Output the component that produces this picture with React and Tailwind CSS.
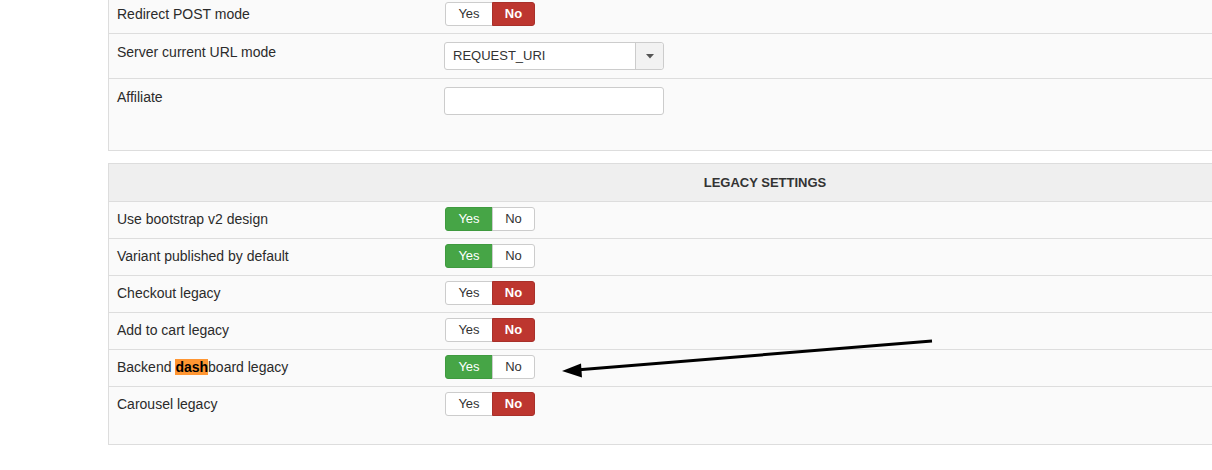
import React from 'react';

const Toggle = ({ value }) => {
  const yes = value === 'yes';
  return (
    <div className="ml-px flex h-[24px] text-[13px] leading-[22px]">
      <span
        className={
          yes
            ? 'w-[48px] rounded-l-[3px] border border-[#3f9a3f] bg-[#46a546] text-center text-white'
            : 'w-[48px] rounded-l-[3px] border border-[#ccc] bg-white text-center text-[#333]'
        }
      >
        Yes
      </span>
      <span
        className={
          yes
            ? 'ml-[-1px] w-[43px] rounded-r-[3px] border border-[#ccc] bg-white text-center text-[#333]'
            : 'ml-[-1px] w-[43px] rounded-r-[3px] border border-[#a8302a] bg-[#bd362f] text-center font-bold text-white'
        }
      >
        No
      </span>
    </div>
  );
};

const Row = ({ label, children, h = 'h-[37px]', labelPt = 'pt-2', ctrlPt = 'pt-[5px]', last }) => (
  <div className={`flex ${h} ${last ? '' : 'border-b border-[#ddd]'}`}>
    <div className={`w-[335px] pl-2 text-[14px] leading-[18px] text-[#2b2b2b] ${labelPt}`}>{label}</div>
    <div className={ctrlPt}>{children}</div>
  </div>
);

const legacy = [
  { label: 'Use bootstrap v2 design', value: 'yes' },
  { label: 'Variant published by default', value: 'yes' },
  { label: 'Checkout legacy', value: 'no' },
  { label: 'Add to cart legacy', value: 'no' },
  {
    label: (
      <>
        Backend <span className="bg-[#ff9632] font-bold text-black">dash</span>board legacy
      </>
    ),
    value: 'yes'
  },
  { label: 'Carousel legacy', value: 'no' }
];

export default function App() {
  return (
    <div className="relative h-[470px] w-[1212px] overflow-hidden bg-white font-['Liberation_Sans',Arial,sans-serif] text-[13px] text-[#333]">
      <div className="ml-[108px] mt-[-3px] w-[1314px]">
        {/* general settings (top cut off) */}
        <div className="border-x border-b border-[#ddd] bg-[#fafafa]">
          <Row label="Redirect POST mode">
            <Toggle value="no" />
          </Row>
          <Row label="Server current URL mode" h="h-[45px]" labelPt="pt-[9px]" ctrlPt="pt-2">
            <div className="flex h-[28px] w-[220px] rounded-[3px] border border-[#ccc] bg-white">
              <div className="flex-1 pl-2 leading-[26px]">REQUEST_URI</div>
              <div className="flex w-[28px] items-center justify-center rounded-r-[3px] border-l border-[#ccc] bg-[#f2f2f2]">
                <svg width="8" height="5" viewBox="0 0 8 5">
                  <path d="M0 0h8L4 4.5z" fill="#555" />
                </svg>
              </div>
            </div>
          </Row>
          <Row label="Affiliate" h="h-[71px]" labelPt="pt-[9px]" ctrlPt="pt-2" last>
            <input className="h-[28px] w-[220px] rounded-[3px] border border-[#ccc] bg-white outline-none" />
          </Row>
        </div>

        {/* legacy settings */}
        <div className="mt-[12px] border border-[#ddd] bg-[#fafafa]">
          <div className="h-[38px] border-b border-[#ddd] bg-[#efefef] text-center font-bold leading-[37px]">
            LEGACY SETTINGS
          </div>
          {legacy.map((item, i) => (
            <Row
              key={i}
              label={item.label}
              h={i === legacy.length - 1 ? 'h-[57px]' : 'h-[37px]'}
              last={i === legacy.length - 1}
            >
              <Toggle value={item.value} />
            </Row>
          ))}
        </div>
      </div>

      {/* annotation arrow */}
      <svg className="pointer-events-none absolute left-0 top-0" width="1212" height="470">
        <line x1="932" y1="341" x2="576" y2="370" stroke="#000" strokeWidth="3" />
        <polygon points="562,371 581,363.5 582,377.5" fill="#000" />
      </svg>
    </div>
  );
}
